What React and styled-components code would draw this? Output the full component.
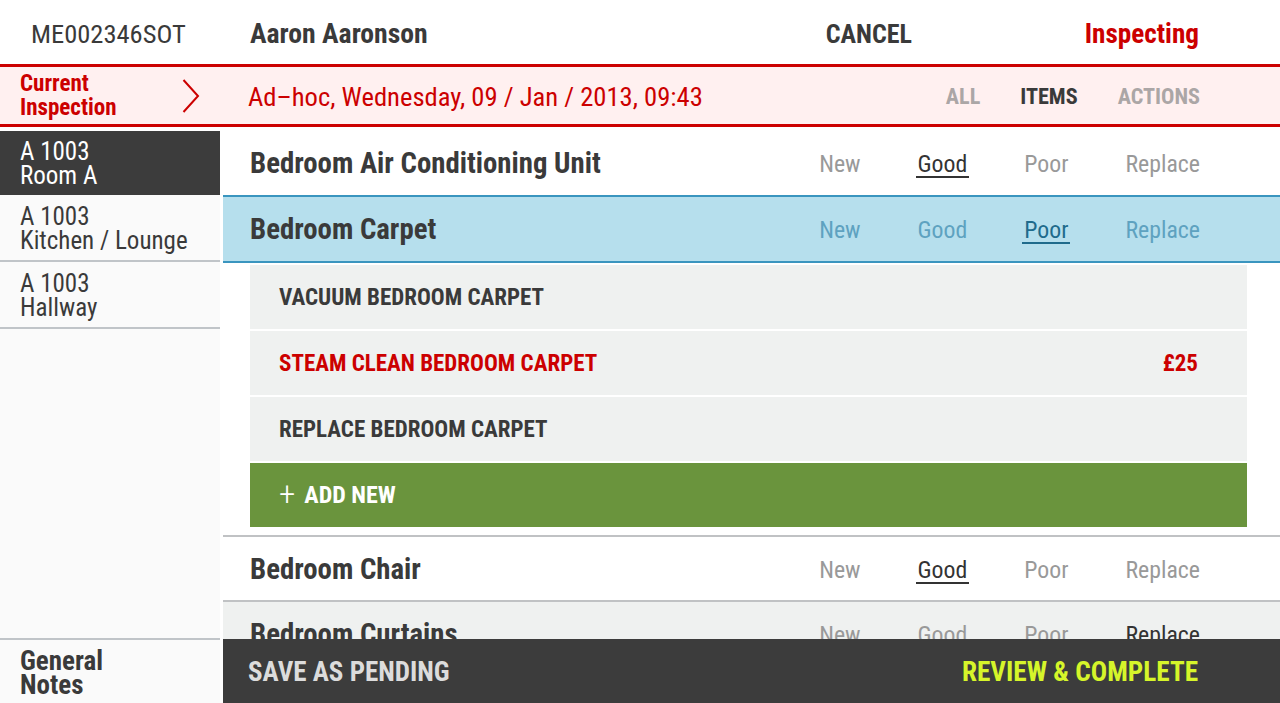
import React from "react";
import styled, { createGlobalStyle } from "styled-components";

const FONT = `"Roboto Condensed", "Liberation Sans Narrow", "DejaVu Sans Condensed", "Liberation Sans", Arial, sans-serif`;

const GlobalStyle = createGlobalStyle`
  html, body { margin: 0; padding: 0; background: #fff; }
  body { font-family: ${FONT}; font-stretch: condensed; color: #3a3a3a; -webkit-font-smoothing: antialiased; }
  * { box-sizing: border-box; }
  button { font-family: inherit; font-stretch: inherit; }
`;

const Screen = styled.div`
  width: 1280px;
  height: 703px;
  display: flex;
  flex-direction: column;
  overflow: hidden;
  background: #fff;
`;

const TopBar = styled.header`
  height: 64px;
  flex-shrink: 0;
  display: flex;
  align-items: center;
  padding-top: 3px;
`;

const RefCode = styled.div`
  width: 220px;
  padding-left: 31px;
  font-size: 26.5px;
  color: #3a3a3a;
`;

const ClientName = styled.div`
  flex: 1;
  padding-left: 30px;
  font-size: 27.7px;
  font-weight: 700;
  color: #3a3a3a;
`;

const TextButton = styled.button`
  border: 0;
  background: none;
  padding: 0;
  margin: 0;
  cursor: pointer;
  font-weight: 700;
  font-size: ${(p) => p.$size || 27}px;
  color: ${(p) => p.$color || "#3a3a3a"};
  text-transform: uppercase;
`;

const Status = styled.div`
  width: 368px;
  padding-right: 81px;
  text-align: right;
  font-size: 27.2px;
  font-weight: 700;
  color: #cc0000;
`;

const Band = styled.div`
  height: 63px;
  flex-shrink: 0;
  display: flex;
  align-items: center;
  padding-top: 1px;
  background: #fff0f0;
  border-top: 3px solid #cc0000;
  border-bottom: 3px solid #cc0000;
`;

const CurrentLabel = styled.div`
  width: 220px;
  height: 100%;
  display: flex;
  align-items: center;
  justify-content: space-between;
  padding: 0 20px 0 20px;
  color: #cc0000;
  font-weight: 700;
  font-size: 23px;
  line-height: 24px;
`;

const Chevron = styled.svg`
  display: block;
  width: 18px;
  height: 34px;
`;

const DateText = styled.div`
  flex: 1;
  padding-left: 28px;
  color: #cc0000;
  font-size: 26.6px;
`;

const Tabs = styled.nav`
  display: flex;
  gap: 40px;
  padding-right: 80px;
`;

const Tab = styled.span`
  font-size: 22.2px;
  font-weight: 700;
  color: ${(p) => (p.$active ? "#3a3a3a" : "#aba6a6")};
`;

const Body = styled.div`
  flex: 1;
  min-height: 0;
  display: flex;
`;

const Sidebar = styled.aside`
  width: 220px;
  flex-shrink: 0;
  margin-top: 4px;
  background: #fafafa;
  display: flex;
  flex-direction: column;
`;

const RoomItem = styled.div`
  height: ${(p) => (p.$active ? 64 : 67)}px;
  padding: 2px 0 0 20px;
  display: flex;
  flex-direction: column;
  justify-content: center;
  font-size: 25px;
  line-height: 24px;
  background: ${(p) => (p.$active ? "#3c3c3c" : "transparent")};
  color: ${(p) => (p.$active ? "#ffffff" : "#3a3a3a")};
  border-bottom: ${(p) => (p.$active ? "none" : "2px solid #c0c4c8")};
`;

const NotesItem = styled.div`
  margin-top: auto;
  height: 65px;
  padding: 2px 0 0 20px;
  display: flex;
  flex-direction: column;
  justify-content: center;
  border-top: 2px solid #c0c4c8;
  font-size: 27px;
  line-height: 24px;
  font-weight: 700;
  color: #3a3a3a;
`;

const Main = styled.main`
  flex: 1;
  min-width: 0;
  margin-left: 3px;
  display: flex;
  flex-direction: column;
`;

const ItemList = styled.div`
  flex: 1;
  min-height: 0;
  overflow: hidden;
`;

const rowTheme = {
  plain: { bg: "#ffffff", border: "#c0c2c4", off: "#999999", on: "#333333" },
  selected: { bg: "#b6dfed", border: "#3a95bf", off: "#5ea2c0", on: "#1f6b8c" },
  shaded: { bg: "#eff1f0", border: "#c0c2c4", off: "#999999", on: "#333333" },
};

const ItemRow = styled.div`
  display: flex;
  align-items: center;
  height: ${(p) => p.$height}px;
  padding: ${(p) => p.$padTop || 0}px 78px 0 27px;
  background: ${(p) => rowTheme[p.$variant].bg};
  border-top: ${(p) => (p.$noTop ? "none" : `2px solid ${rowTheme[p.$variant].border}`)};
  border-bottom: ${(p) =>
    p.$variant === "selected" ? `2px solid ${rowTheme.selected.border}` : "none"};
`;

const ItemName = styled.div`
  flex: 1;
  font-size: 28.8px;
  font-weight: 700;
  color: #3a3a3a;
  white-space: nowrap;
`;

const Options = styled.div`
  display: flex;
  gap: 53px;
  padding-top: 4px;
`;

const Option = styled.span`
  font-size: 23.8px;
  line-height: 24px;
  padding: 0 2px;
  color: ${(p) => (p.$on ? rowTheme[p.$variant].on : rowTheme[p.$variant].off)};
  border-bottom: 2px solid
    ${(p) => (p.$on ? rowTheme[p.$variant].on : "transparent")};
`;

const ActionPanel = styled.div`
  display: flex;
  flex-direction: column;
  gap: 2px;
  padding: 2px 33px 8px 27px;
`;

const ActionRow = styled.div`
  height: 64px;
  display: flex;
  align-items: center;
  justify-content: space-between;
  padding: 0 49px 0 29px;
  background: ${(p) => (p.$add ? "#6a943d" : "#eff1f0")};
  color: ${(p) => (p.$add ? "#ffffff" : p.$highlight ? "#cc0000" : "#3a3a3a")};
  font-size: ${(p) => (p.$add ? 24 : 23)}px;
  font-weight: 700;
  text-transform: uppercase;
`;

const Plus = styled.span`
  display: inline-block;
  font-weight: 300;
  font-size: 33px;
  line-height: 24px;
  margin-right: 9px;
  vertical-align: -2px;
`;

const Footer = styled.footer`
  height: 64px;
  flex-shrink: 0;
  display: flex;
  align-items: center;
  justify-content: space-between;
  padding: 1px 82px 0 25px;
  background: #3c3c3c;
`;

const OPTIONS = ["New", "Good", "Poor", "Replace"];

const items = [
  { name: "Bedroom Air Conditioning Unit", state: "Good", variant: "plain", height: 68, noTop: true, padTop: 3 },
  { name: "Bedroom Carpet", state: "Poor", variant: "selected", height: 68, expanded: true },
  { name: "Bedroom Chair", state: "Good", variant: "plain", height: 65 },
  { name: "Bedroom Curtains", state: "Replace", variant: "shaded", height: 65 },
  { name: "Bedroom Desk", state: "Good", variant: "plain", height: 65 },
];

const actions = [
  { label: "Vacuum Bedroom Carpet" },
  { label: "Steam Clean Bedroom Carpet", price: "£25", highlight: true },
  { label: "Replace Bedroom Carpet" },
];

const rooms = [
  { code: "A 1003", name: "Room A", active: true },
  { code: "A 1003", name: "Kitchen / Lounge" },
  { code: "A 1003", name: "Hallway" },
];

export default function App() {
  return (
    <Screen>
      <GlobalStyle />
      <TopBar>
        <RefCode>ME002346SOT</RefCode>
        <ClientName>Aaron Aaronson</ClientName>
        <TextButton $size={26}>Cancel</TextButton>
        <Status>Inspecting</Status>
      </TopBar>

      <Band>
        <CurrentLabel>
          <div>
            Current
            <br />
            Inspection
          </div>
          <Chevron viewBox="0 0 18 34" aria-hidden="true">
            <polyline points="1.5,1 16,17 1.5,33" fill="none" stroke="#cc0000" strokeWidth="2" />
          </Chevron>
        </CurrentLabel>
        <DateText>Ad–hoc, Wednesday, 09 / Jan / 2013, 09:43</DateText>
        <Tabs>
          <Tab>ALL</Tab>
          <Tab $active>ITEMS</Tab>
          <Tab>ACTIONS</Tab>
        </Tabs>
      </Band>

      <Body>
        <Sidebar>
          {rooms.map((r) => (
            <RoomItem key={r.name} $active={r.active}>
              <span>{r.code}</span>
              <span>{r.name}</span>
            </RoomItem>
          ))}
          <NotesItem>
            <span>General</span>
            <span>Notes</span>
          </NotesItem>
        </Sidebar>

        <Main>
          <ItemList>
            {items.map((it) => (
              <React.Fragment key={it.name}>
                <ItemRow
                  $variant={it.variant}
                  $height={it.height}
                  $noTop={it.noTop}
                  $padTop={it.padTop}
                >
                  <ItemName>{it.name}</ItemName>
                  <Options>
                    {OPTIONS.map((o) => (
                      <Option key={o} $variant={it.variant} $on={o === it.state}>
                        {o}
                      </Option>
                    ))}
                  </Options>
                </ItemRow>
                {it.expanded && (
                  <ActionPanel>
                    {actions.map((a) => (
                      <ActionRow key={a.label} $highlight={a.highlight}>
                        <span>{a.label}</span>
                        {a.price && <span>{a.price}</span>}
                      </ActionRow>
                    ))}
                    <ActionRow $add>
                      <span>
                        <Plus>+</Plus>Add New
                      </span>
                    </ActionRow>
                  </ActionPanel>
                )}
              </React.Fragment>
            ))}
          </ItemList>
          <Footer>
            <TextButton $size={27} $color="#dcdcdc">Save as Pending</TextButton>
            <TextButton $size={27.2} $color="#d6f52a">Review &amp; Complete</TextButton>
          </Footer>
        </Main>
      </Body>
    </Screen>
  );
}
